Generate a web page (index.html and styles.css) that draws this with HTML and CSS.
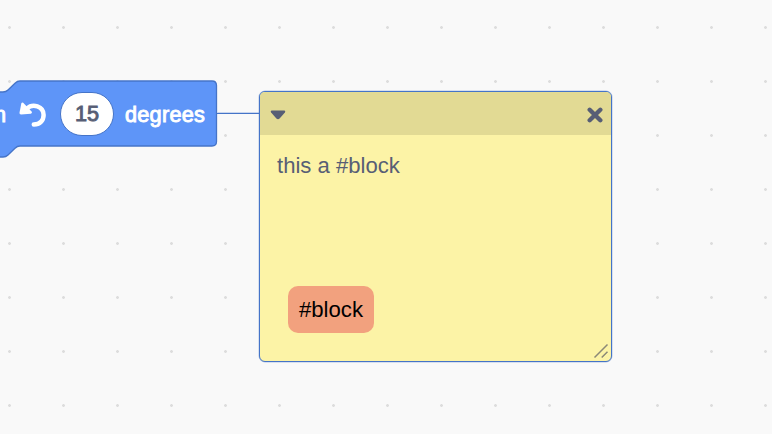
FILE: index.html
```
<!DOCTYPE html>
<html lang="en">
<head>
<meta charset="utf-8">
<title>Workspace</title>
<link rel="stylesheet" href="styles.css">
</head>
<body>
<main class="workspace">
  <section class="block">
    <svg class="block-shape" width="218" height="78" viewBox="0 0 218 78" aria-hidden="true">
      <path d="M-5 12H3Q6 12 8 10L15 3.2Q17.300 1 20 1H212Q216.500 1 216.500 5.500V61.500Q216.500 66 212 66H20Q17.300 66 15 68.200L8 75Q6 77 3 77H-5Z"/>
    </svg>
    <div class="block-row">
      <span class="label turn">n</span>
      <svg class="turn-icon" width="28" height="28" viewBox="0 0 28 28" aria-hidden="true">
        <path class="arc" d="M9 8.500C14.500 3.200 25.600 5.800 25.600 15C25.600 20.700 21.800 24.300 15.800 24.500"/>
        <path class="head" d="M5.200 2.800L13.800 11.800Q14.500 13.400 12.800 13.700L3 14.400Q1.300 14.300 1.500 12.700L3.300 3.600Q3.900 1.900 5.200 2.800Z"/>
      </svg>
      <span class="number">15</span>
      <span class="label degrees">degrees</span>
    </div>
  </section>
  <div class="connector"></div>
  <article class="note">
    <header class="note-bar">
      <svg width="16" height="10" viewBox="0 0 16 10" aria-hidden="true">
        <path d="M1.700 .5H14.300Q16 .8 14.900 2.400L9.600 8.500Q8 9.900 6.400 8.500L1.100 2.400Q0 .8 1.700 .5Z"/>
      </svg>
      <svg class="close" width="16" height="16" viewBox="0 0 16 16" aria-hidden="true">
        <path d="M2.700 2.800L13.300 13.200M13.300 2.800L2.700 13.200"/>
      </svg>
    </header>
    <p class="note-text">this a #block</p>
    <footer class="note-foot">
      <span class="tag">#block</span>
      <svg class="grip" width="16" height="16" viewBox="0 0 16 16" aria-hidden="true">
        <path d="M1.500 14.500L14.500 1.500M8.700 14.500L14.500 8.700"/>
      </svg>
    </footer>
  </article>
</main>
</body>
</html>
```
FILE: styles.css
```
* { box-sizing: border-box; }
body { margin: 0; font-family: "Liberation Sans", Arial, sans-serif; }
.workspace {
  position: relative;
  width: 772px;
  height: 434px;
  overflow: hidden;
  background: #f9f9f9 radial-gradient(circle at 9.5px 27.5px, #dddddd 1px, transparent 1.7px) 0 0 / 54px 54px;
}
.block { position: absolute; left: 0; top: 80px; width: 218px; height: 78px; }
.block-shape { position: absolute; left: 0; top: 0; fill: #5e95f8; stroke: #4574c8; stroke-width: 1.3; }
.block-row { position: relative; display: flex; align-items: center; height: 67px; }
.label { color: #fff; font-size: 21.7px; -webkit-text-stroke: .9px currentColor; line-height: 26px; padding-top: 2px; }
.turn { width: 6px; margin-right: 12px; display: flex; justify-content: flex-end; }
.degrees { letter-spacing: .25px; }
.turn-icon { flex: none; }
.turn-icon .arc { fill: none; stroke: #fff; stroke-width: 4.5; stroke-linecap: round; }
.turn-icon .head { fill: #fff; }
.number {
  display: flex;
  align-items: center;
  justify-content: center;
  width: 54px;
  height: 44px;
  margin: 0 11px 0 14px;
  padding-top: 1px;
  border: 1px solid #4574c8;
  border-radius: 22px;
  background: #fff;
  color: #575e75;
  font-size: 21.7px;
  -webkit-text-stroke: .9px currentColor;
}
.connector { position: absolute; left: 217px; top: 113px; width: 42px; height: 1px; background: #4574c8; box-shadow: 0 -1px #c9d6ee; }
.note {
  position: absolute;
  left: 259px;
  top: 91px;
  width: 353px;
  height: 271px;
  display: flex;
  flex-direction: column;
  border: 1px solid #4574c8;
  border-radius: 6px;
  background: #fcf3a6;
  box-shadow: 0 0 0 .5px #4574c860;
  overflow: hidden;
}
.note-bar {
  display: flex;
  align-items: center;
  justify-content: space-between;
  flex: none;
  height: 43px;
  padding: 3px 8px 0 10px;
  background: #e2da94;
  fill: #575e75;
}
.close { fill: none; stroke: #575e75; stroke-width: 4.4; stroke-linecap: round; }
.note-text { margin: 18px 17px 0; color: #575e75; font-size: 22.1px; line-height: 26px; }
.note-foot { display: flex; align-items: flex-end; justify-content: space-between; margin-top: auto; padding: 0 2px 2px 28px; }
.tag {
  display: flex;
  align-items: center;
  justify-content: center;
  width: 86px;
  height: 47px;
  margin-bottom: 26px;
  border-radius: 10px;
  background: #f2a17e;
  color: #000;
  font-size: 22.2px;
}
.grip { fill: none; stroke: #8b8878; stroke-width: 1.5; }
```
